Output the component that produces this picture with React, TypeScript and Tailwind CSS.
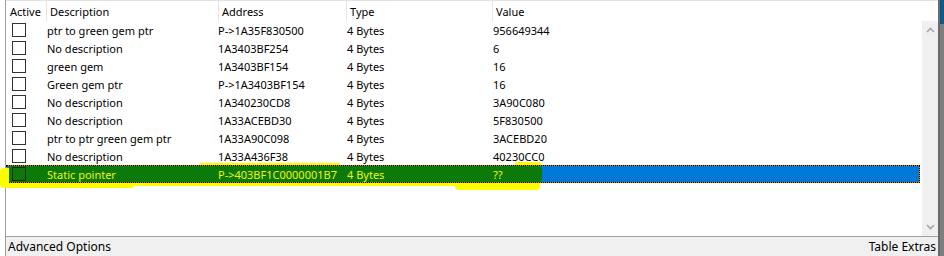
type Entry = { desc: string; addr: string; type: string; value: string };

const entries: Entry[] = [
  { desc: "ptr to green gem ptr", addr: "P->1A35F830500", type: "4 Bytes", value: "956649344" },
  { desc: "No description", addr: "1A3403BF254", type: "4 Bytes", value: "6" },
  { desc: "green gem", addr: "1A3403BF154", type: "4 Bytes", value: "16" },
  { desc: "Green gem ptr", addr: "P->1A3403BF154", type: "4 Bytes", value: "16" },
  { desc: "No description", addr: "1A340230CD8", type: "4 Bytes", value: "3A90C080" },
  { desc: "No description", addr: "1A33ACEBD30", type: "4 Bytes", value: "5F830500" },
  { desc: "ptr to ptr green gem ptr", addr: "1A33A90C098", type: "4 Bytes", value: "3ACEBD20" },
  { desc: "No description", addr: "1A33A436F38", type: "4 Bytes", value: "40230CC0" },
];

function Checkbox({ selected }: { selected?: boolean }) {
  return (
    <div
      className={`h-[14px] w-[14px] border ${
        selected ? "border-[#1d1d1d] bg-transparent" : "border-[#333333] bg-white"
      }`}
    />
  );
}

function Row({ e }: { e: Entry }) {
  return (
    <div className="flex h-[18px] items-center whitespace-nowrap">
      <div className="flex w-[38px] shrink-0 pl-[6px]">
        <Checkbox />
      </div>
      <div className="w-[171px] shrink-0 pl-[3px]">{e.desc}</div>
      <div className="w-[129px] shrink-0 pl-[3px]">{e.addr}</div>
      <div className="w-[146px] shrink-0 pl-[3px]">{e.type}</div>
      <div className="pl-[3px]">{e.value}</div>
    </div>
  );
}

function SelectedRow() {
  return (
    <div className="mr-[2px] h-[18px] bg-[#e08a00]">
      <div className="relative flex h-full items-center whitespace-nowrap border border-dotted border-black bg-[#0078d7] bg-clip-padding text-[#f4f40c]">
        {/* green marker scribble over the selection */}
        <div className="absolute left-[2px] top-0 h-[16px] w-[533px] rounded-r-[3px] bg-[#0b7a0b]" />
        <div className="relative flex w-[37px] shrink-0 pl-[5px]">
          <Checkbox selected />
        </div>
        <div className="relative w-[171px] shrink-0 pl-[3px]">Static pointer</div>
        <div className="relative w-[129px] shrink-0 pl-[3px]">P-&gt;403BF1C0000001B7</div>
        <div className="relative w-[146px] shrink-0 pl-[3px]">4 Bytes</div>
        <div className="relative pl-[3px]">??</div>
      </div>
    </div>
  );
}

function HeaderCell({ label, w, first }: { label: string; w?: string; first?: boolean }) {
  return (
    <div
      className={`flex h-full items-center ${w ?? "flex-1"} ${
        first ? "pl-[4px]" : "border-l border-[#e5e5e5] pl-[3px]"
      }`}
    >
      {label}
    </div>
  );
}

function Chevron({ down }: { down?: boolean }) {
  return (
    <svg width="9" height="6" viewBox="0 0 9 6" className={down ? "rotate-180" : ""}>
      <path d="M1 5 L4.5 1.5 L8 5" fill="none" stroke="#a6a6a6" strokeWidth="1.6" />
    </svg>
  );
}

export default function App() {
  return (
    <div
      className="relative flex h-[256px] w-[944px] overflow-hidden bg-white text-[11px] leading-none text-black"
      style={{ fontFamily: '"Noto Sans", "Open Sans", sans-serif' }}
    >
      <div className="w-[5px] shrink-0 bg-white" />

      <div className="flex w-[933px] shrink-0 flex-col border-l border-[#a0a0a0]">
        <div className="flex h-[236px] flex-col border-t border-[#e3e3e3]">
          <div className="flex h-[20px] shrink-0 items-stretch">
            <HeaderCell label="Active" w="w-[40px]" first />
            <HeaderCell label="Description" w="w-[172px]" />
            <HeaderCell label="Address" w="w-[128px]" />
            <HeaderCell label="Type" w="w-[146px]" />
            <HeaderCell label="Value" />
          </div>

          <div className="flex min-h-0 flex-1">
            <div className="flex-1">
              {entries.map((e, i) => (
                <Row key={i} e={e} />
              ))}
              <SelectedRow />
            </div>
            <div className="flex w-[16px] shrink-0 flex-col items-center justify-between bg-[#f0f0f0] py-[6px]">
              <Chevron />
              <Chevron down />
            </div>
          </div>
        </div>

        <div className="flex flex-1 items-center justify-between border-t border-[#a0a0a0] bg-[#f0f0f0] pl-[2px] pr-[2px] text-[12px]">
          <span>Advanced Options</span>
          <span>Table Extras</span>
        </div>
      </div>

      <div className="w-[2px] shrink-0 bg-[#6b6b6b]" />
      <div className="flex w-[4px] shrink-0 flex-col">
        <div className="h-[24px] bg-[#0d5a8a]" />
        <div className="flex-1 bg-[#7e7e7e]" />
      </div>

      {/* yellow highlighter marks around the selected row */}
      <div className="absolute left-0 top-[168px] h-[20px] w-[9px] rounded-l-[4px] bg-[#fdfd00]" />
      <div className="absolute left-[4px] top-[183px] h-[5px] w-[130px] rounded-b-[3px] bg-[#fdfd00]" />
      <div className="absolute left-[130px] top-[183px] h-[3px] w-[330px] bg-[#fdfd00]" />
      <div className="absolute left-[455px] top-[183px] h-[7px] w-[85px] rounded-b-[4px] bg-[#fdfd00]" />
      <div className="absolute left-[200px] top-[163px] h-[2px] w-[140px] bg-[#fdfd00]" />
      <div className="absolute left-[515px] top-[162px] h-[3px] w-[26px] rounded-t-[2px] bg-[#fdfd00]" />
    </div>
  );
}
